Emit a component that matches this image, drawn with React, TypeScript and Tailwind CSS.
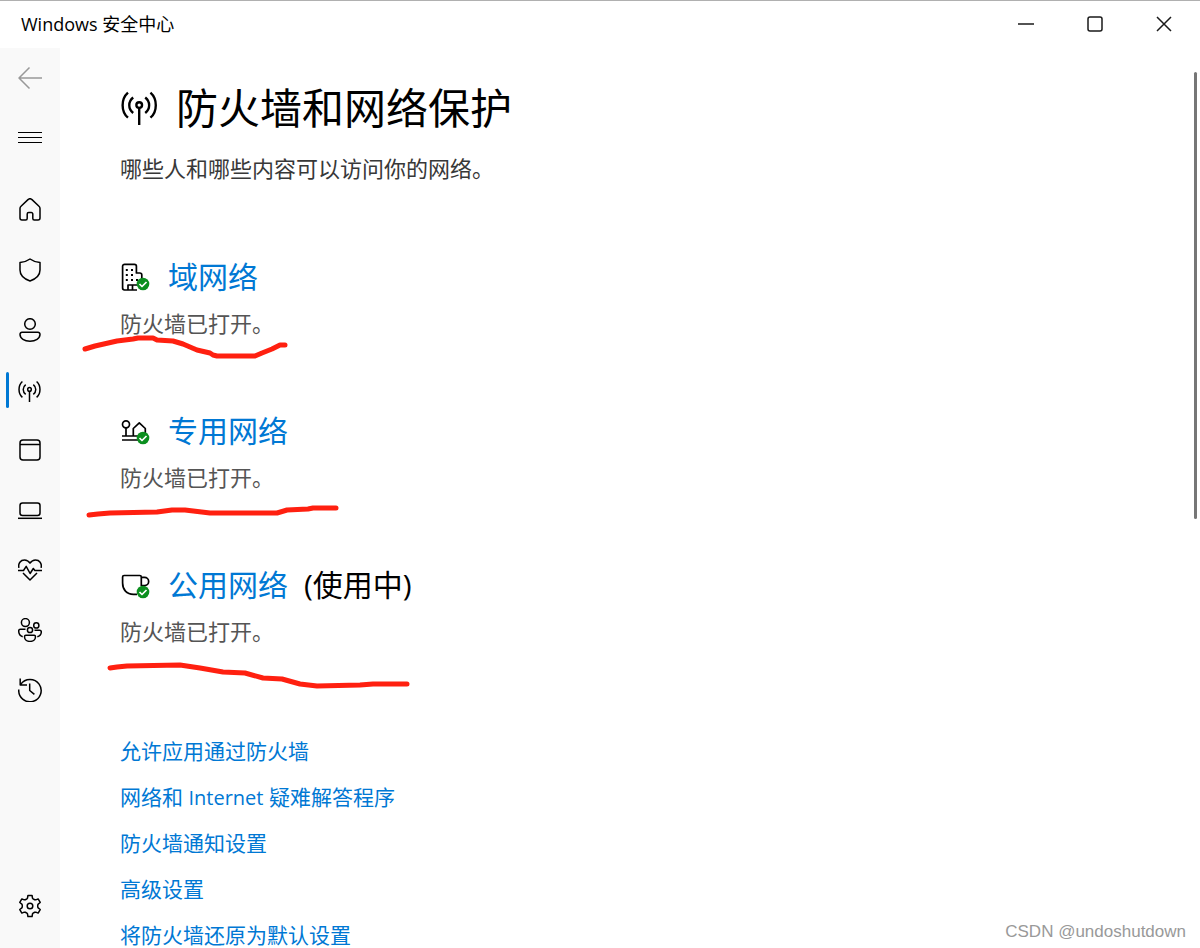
import type { ReactNode } from "react";

type IconProps = { children: ReactNode; className?: string };

function Icon({ children, className = "size-6" }: IconProps) {
  return (
    <svg
      viewBox="0 0 24 24"
      className={`${className} shrink-0`}
      fill="none"
      stroke="currentColor"
      strokeWidth="1.5"
      strokeLinejoin="round"
      aria-hidden="true"
    >
      {children}
    </svg>
  );
}

const antenna = (
  <>
    <circle cx="11.5" cy="11.4" r="1.8" />
    <path d="M11.5 13.2V24M4.4 3.5C-.1 7.5-.1 15.5 4.4 19.4M18.6 3.5c4.5 4 4.5 12 0 15.9M7.7 6.6c-3.3 2.6-3.3 7.2 0 9.8M15.3 6.6c3.3 2.6 3.3 7.2 0 9.8" />
  </>
);

function gearPath() {
  const profile: [number, number][] = [
    [-11, 10.8],
    [11, 10.8],
    [17, 8.4],
    [23, 7.8],
    [37, 7.8],
    [43, 8.4],
  ];
  const points: string[] = [];
  for (let tooth = 0; tooth < 6; tooth++) {
    for (const [angle, radius] of profile) {
      const a = ((tooth * 60 + angle) * Math.PI) / 180;
      points.push(`${(12 + radius * Math.sin(a)).toFixed(2)} ${(12 - radius * Math.cos(a)).toFixed(2)}`);
    }
  }
  return `M${points.join("L")}Z`;
}

const navItems: { label: string; active?: boolean; icon: ReactNode }[] = [
  {
    label: "主页",
    icon: (
      <path d="M2 10.6c0-.9.3-1.7 1-2.3l7-6.7c1.2-1.1 2.8-1.1 4 0l7 6.7c.7.6 1 1.4 1 2.3V20a2 2 0 0 1-2 2h-3.7a1.5 1.5 0 0 1-1.5-1.5V16a1.5 1.5 0 0 0-1.5-1.5h-2.6A1.5 1.5 0 0 0 9.2 16v4.5A1.5 1.5 0 0 1 7.7 22H4a2 2 0 0 1-2-2z" />
    ),
  },
  {
    label: "病毒和威胁防护",
    icon: <path d="M12 1c3 2.2 6.2 3.2 10 3.5V12c0 5-3.8 8.8-10 11C5.8 20.8 2 17 2 12V4.5C5.8 4.2 9 3.2 12 1z" />,
  },
  {
    label: "帐户保护",
    icon: (
      <>
        <circle cx="12" cy="6" r="5.3" />
        <path d="M4 14.3h16a2 2 0 0 1 2 2c0 4.2-4.5 6.9-10 6.9S2 20.5 2 16.3a2 2 0 0 1 2-2z" />
      </>
    ),
  },
  { label: "防火墙和网络保护", active: true, icon: antenna },
  {
    label: "应用和浏览器控制",
    icon: (
      <>
        <rect x="2" y="2" width="20" height="20" rx="3" />
        <path d="M2 6.5h20" />
      </>
    ),
  },
  {
    label: "设备安全性",
    icon: (
      <>
        <rect x="2" y="5" width="20" height="12.5" rx="2.5" />
        <path d="M0 20.3h24" />
      </>
    ),
  },
  {
    label: "设备性能和运行状况",
    icon: (
      <path d="M.9 9.8C-.1 5.2 2.6 2 6.5 2c2.3 0 4.2 1.2 5.5 3.2C13.3 3.2 15.2 2 17.5 2c3.9 0 6.6 3.2 5.6 7.8M0 12.5h5.5L8.2 8.3l3.9 7.2 3.2-5 1.6 2H24M5 15l7 7 7-7" />
    ),
  },
  {
    label: "家庭选项",
    icon: (
      <>
        <circle cx="7.4" cy="4.6" r="4" />
        <circle cx="18.3" cy="7.4" r="2.6" />
        <circle cx="12" cy="12" r="2.6" />
        <path d="M7.5 11.3H2.3A1.6 1.6 0 0 0 .7 12.9c0 2.9 1.6 4.9 4 5.8M16.5 12.3h5.2a1.6 1.6 0 0 1 1.6 1.6c0 2.4-1.5 4.1-4 4.8M7.9 17.3h8.2a1.4 1.4 0 0 1 1.4 1.4c0 2.8-2.4 4.7-5.5 4.7s-5.5-1.9-5.5-4.7a1.4 1.4 0 0 1 1.4-1.4z" />
      </>
    ),
  },
  {
    label: "保护历史记录",
    icon: <path d="M2.7 6.3A11.2 11.2 0 1 1 .8 11.5M2.2.5v6.6H9M11.7 5.5v7l4.7 3.9" />,
  },
];

function CheckBadge({ cy }: { cy: number }) {
  return (
    <>
      <circle cx="23" cy={cy} r="6.3" fill="#0b8f1f" stroke="none" />
      <path d={`M19.5 ${cy}l2.5 2.5 4.5-4.5`} stroke="#fff" strokeWidth="1.7" />
    </>
  );
}

const networks: { name: string; note?: string; icon: ReactNode; mark: string }[] = [
  {
    name: "域网络",
    icon: (
      <>
        <path d="M17 28H4.500A2 2 0 0 1 2.600 26V4.300a2 2 0 0 1 2-2h9.800a2 2 0 0 1 2 2v6.700h3.400a2 2 0 0 1 2 2V17M8 28v-5h9M12.500 23v5" />
        <path d="M5.800 8h2M11 8h2M5.800 13h2M11 13h2M5.800 18h2M11 18h2M16 18h2" strokeWidth="2" />
        <CheckBadge cy={22} />
      </>
    ),
    mark: "M-35 95L-25 92L-3 87L13 85L18 84H33L37 86L53 87L63 90L77 96L90 99L93 101L97 102H135L142 99L152 95L160 91L165 91",
  },
  {
    name: "专用网络",
    icon: (
      <>
        <circle cx="6" cy="8.3" r="3.5" />
        <path d="M6 11.8v8M2 20h18M2 24h16M13.3 20v-7.5l6-5.7 6 5.7V17" />
        <CheckBadge cy={22} />
      </>
    ),
    mark: "M-31 107L-22 106L-10 105L37 104L52 102H65L90 105H157L167 102L188 101L193 100H216",
  },
  {
    name: "公用网络",
    note: "(使用中)",
    icon: (
      <>
        <path d="M17 24.3h-3.500C6.500 24.300 2.600 19.500 2.600 13V7a1.500 1.500 0 0 1 1.500-1.500h15.700A1.500 1.500 0 0 1 21.300 7v9M21.300 7.300h3.200a3.800 3.800 0 0 1 0 8.300h-3" />
        <CheckBadge cy={22} />
      </>
    ),
    mark: "M-10 106L-3 105L7 104L60 103L80 106L103 110L125 111L143 116L162 117L180 122L197 124L240 123L253 122H287",
  },
];

const links: { id: string; text: ReactNode }[] = [
  { id: "allow", text: "允许应用通过防火墙" },
  {
    id: "troubleshoot",
    text: (
      <>
        网络和 <span className="text-xl leading-6">Internet</span> 疑难解答程序
      </>
    ),
  },
  { id: "notifications", text: "防火墙通知设置" },
  { id: "advanced", text: "高级设置" },
  { id: "restore", text: "将防火墙还原为默认设置" },
];

function TitleBar() {
  return (
    <header className="flex h-12 shrink-0 items-center justify-between border-t border-[#b0b0b0] pr-0.5 pb-0.5 pl-[21px]">
      <span className="text-lg">Windows 安全中心</span>
      <div className="flex self-stretch">
        {[
          { label: "最小化", path: <path d="M0 8h16" /> },
          { label: "最大化", path: <rect x="1" y="1" width="14" height="14" rx="2" /> },
          { label: "关闭", path: <path d="M1 1l14 14M15 1L1 15" /> },
        ].map((control) => (
          <button key={control.label} type="button" aria-label={control.label} className="flex w-[69px] items-center justify-center">
            <svg viewBox="0 0 16 16" className="size-4" fill="none" stroke="#1a1a1a" strokeWidth="1.5">
              {control.path}
            </svg>
          </button>
        ))}
      </div>
    </header>
  );
}

function Sidebar() {
  const cell = "relative flex h-[60px] w-full items-center justify-center";
  return (
    <nav className="flex w-[60px] shrink-0 flex-col bg-[#f9f9f9] pb-3">
      <button type="button" aria-label="后退" className={`${cell} text-[#999999]`}>
        <Icon>
          <path d="M24 12H1M11.5 1.5L1 12l10.5 10.5" />
        </Icon>
      </button>
      <button type="button" aria-label="打开导航" className={cell}>
        <Icon>
          <path d="M0 6.5h24M0 11.5h24M0 16.5h24" strokeWidth="1" />
        </Icon>
      </button>
      <ul className="mt-3">
        {navItems.map((item) => (
          <li key={item.label}>
            <a href="#" aria-label={item.label} className={cell}>
              {item.active && <span className="absolute left-1.5 h-9 w-[3px] rounded-full bg-[#0078d4]" />}
              <Icon>{item.icon}</Icon>
            </a>
          </li>
        ))}
      </ul>
      <a href="#" aria-label="设置" className={`${cell} mt-auto`}>
        <Icon>
          <path d={gearPath()} />
          <circle cx="12" cy="12" r="2.8" />
        </Icon>
      </a>
    </nav>
  );
}

export default function App() {
  return (
    <div className="relative flex h-screen flex-col overflow-hidden bg-white font-['Open_Sans','Noto_Sans_CJK_SC',sans-serif] text-black">
      <TitleBar />
      <div className="flex min-h-0 flex-1">
        <Sidebar />
        <main className="min-w-0 flex-1 overflow-hidden px-[60px] pt-8">
          <div className="flex items-center gap-4">
            <Icon className="mx-px mb-1 size-[38px]">{antenna}</Icon>
            <h1 className="text-[42px] leading-[56px]">防火墙和网络保护</h1>
          </div>
          <p className="mt-4 text-[22px] leading-8 text-[#383838]">哪些人和哪些内容可以访问你的网络。</p>

          <div className="mt-[70px] flex flex-col gap-[62px]">
            {networks.map((network) => (
              <section key={network.name} className="relative">
                <h2 className="flex items-center text-3xl leading-[46px]">
                  <svg
                    viewBox="0 0 30 30"
                    className="mr-[18px] size-[30px] shrink-0"
                    fill="none"
                    stroke="currentColor"
                    strokeWidth="1.7"
                    strokeLinejoin="round"
                    aria-hidden="true"
                  >
                    {network.icon}
                  </svg>
                  <a href="#" className="text-[#0078d4]">
                    {network.name}
                  </a>
                  {network.note && <span className="ml-4">{network.note}</span>}
                </h2>
                <p className="text-[22px] leading-[46px] text-[#555555]">防火墙已打开。</p>
                <svg
                  className="pointer-events-none absolute top-0 left-0 size-px overflow-visible"
                  fill="none"
                  stroke="#ff2010"
                  strokeWidth="5"
                  strokeLinecap="round"
                  strokeLinejoin="round"
                  aria-hidden="true"
                >
                  <path d={network.mark} />
                </svg>
              </section>
            ))}
          </div>

          <ul className="mt-[85px] flex flex-col gap-[22px] text-[21px] leading-6 text-[#0078d4]">
            {links.map((link) => (
              <li key={link.id} className="h-6">
                <a href="#">{link.text}</a>
              </li>
            ))}
          </ul>
        </main>
      </div>
      <div className="absolute top-[72px] right-[3px] h-[447px] w-[3px] rounded-full bg-[#767676]" />
      <span className="absolute right-3.5 bottom-1 font-['Liberation_Sans',sans-serif] text-[17px] leading-6 text-[#999999]">
        CSDN @undoshutdown
      </span>
    </div>
  );
}
